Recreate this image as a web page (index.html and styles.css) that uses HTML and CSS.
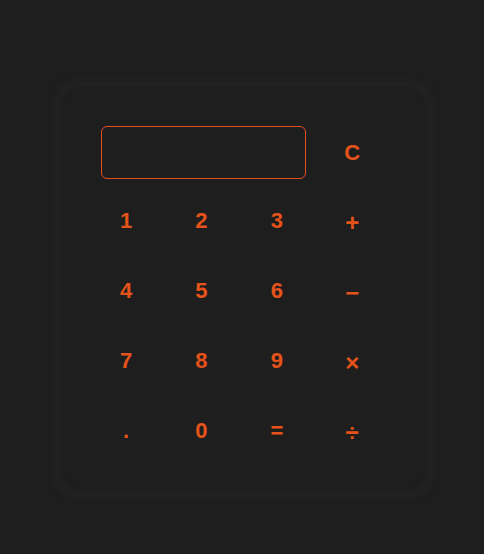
FILE: index.html
```html
<!DOCTYPE html>
<html>
<head>
<meta charset="utf-8">
<link rel="stylesheet" href="styles.css">
</head>
<body>
<div class="calc">
  <div class="grid">
    <div class="display"></div>
    <button class="key">C</button>
    <button class="key">1</button>
    <button class="key">2</button>
    <button class="key">3</button>
    <button class="key op">+</button>
    <button class="key">4</button>
    <button class="key">5</button>
    <button class="key">6</button>
    <button class="key op">−</button>
    <button class="key">7</button>
    <button class="key">8</button>
    <button class="key">9</button>
    <button class="key op">×</button>
    <button class="key">.</button>
    <button class="key">0</button>
    <button class="key">=</button>
    <button class="key op">÷</button>
  </div>
</div>
</body>
</html>
```
FILE: styles.css
```css
html, body {
  margin: 0;
  padding: 0;
  background: #1e1e1e;
  width: 484px;
  height: 554px;
  overflow: hidden;
}
body {
  padding-top: 84px;
  padding-left: 57px;
  box-sizing: border-box;
  font-family: "Liberation Sans", Arial, sans-serif;
}
.calc {
  width: 373px;
  height: 410px;
  box-sizing: border-box;
  padding: 35px 40px 29px 31.5px;
  border-radius: 22px;
  background: #1e1e1e;
  box-shadow: 0 0 10px 1px #272727, inset 0 0 7px 1px #262626;
}
.grid {
  display: grid;
  grid-template-columns: repeat(4, 75.33px);
  grid-template-rows: 66px repeat(4, 70px);
}
.display {
  grid-column: span 3;
  align-self: center;
  margin-left: 12.5px;
  width: 205px;
  height: 53px;
  box-sizing: border-box;
  border: 1px solid #e5501a;
  border-radius: 6px;
}
.key {
  background: transparent;
  border: none;
  padding: 2px 0 0;
  margin: 0;
  color: #e5531a;
  font-family: "Liberation Sans", Arial, sans-serif;
  font-weight: bold;
  font-size: 22px;
  line-height: 1;
  display: flex;
  align-items: center;
  justify-content: center;
}
.key.op {
  font-size: 24px;
  padding-top: 6px;
}
```
